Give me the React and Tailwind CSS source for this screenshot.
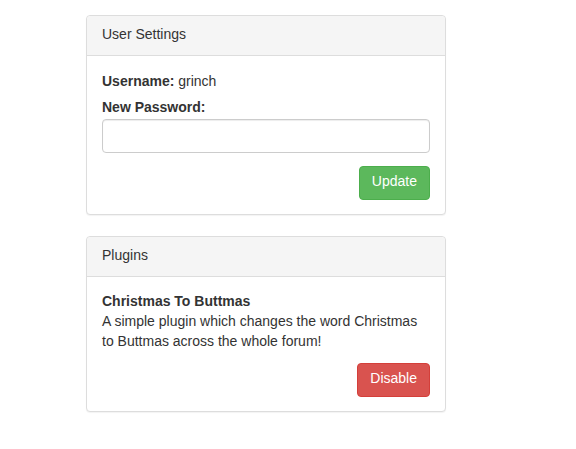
import React from 'react';

function Panel({ title, children, className = '' }) {
  return (
    <div className={`rounded border border-[#ddd] bg-white shadow-[0_1px_1px_rgba(0,0,0,0.05)] ${className}`}>
      <div className="rounded-t border-b border-[#ddd] bg-[#f5f5f5] px-[15px] pt-[8px] pb-[11px] text-[14px] leading-5 text-[#333]">
        {title}
      </div>
      <div className="px-[15px] pt-[15px] pb-[14px]">{children}</div>
    </div>
  );
}

function Button({ children, className }) {
  return (
    <button
      type="button"
      className={`flex h-[34px] items-start rounded border px-3 pt-[4px] text-[14px] leading-5 text-white ${className}`}
    >
      {children}
    </button>
  );
}

export default function App() {
  return (
    <div
      className="min-h-[449px] bg-white text-[14px] leading-5 text-[#333]"
      style={{ fontFamily: '"Liberation Sans", Arial, sans-serif' }}
    >
      <div className="ml-[86px] w-[360px] pt-[15px]">
        <Panel title="User Settings" className="mb-[21px]">
          <div className="mb-[6px]">
            <span className="font-bold">Username:</span> grinch
          </div>
          <label className="mb-[2px] block font-bold">New Password:</label>
          <input
            type="password"
            className="block h-[34px] w-full rounded border border-[#ccc] bg-white px-3 py-1.5 shadow-[inset_0_1px_1px_rgba(0,0,0,0.075)] outline-none"
          />
          <div className="mt-[13px] flex justify-end">
            <Button className="border-[#4cae4c] bg-[#5cb85c]">Update</Button>
          </div>
        </Panel>
        <Panel title="Plugins">
          <div className="-mt-px font-bold">Christmas To Buttmas</div>
          <p>
            A simple plugin which changes the word Christmas to Buttmas across the whole forum!
          </p>
          <div className="mt-[12px] flex justify-end">
            <Button className="border-[#d43f3a] bg-[#d9534f]">Disable</Button>
          </div>
        </Panel>
      </div>
    </div>
  );
}
